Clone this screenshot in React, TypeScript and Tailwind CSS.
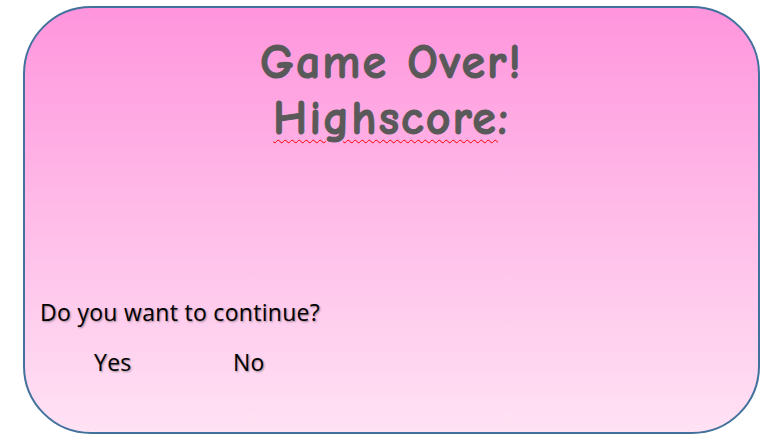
export default function App() {
  return (
    <div className="w-[783px] h-[445px] bg-white pt-[6px] pl-[23px]">
      <div
        className="w-[737px] h-[428px] rounded-[68px] border-2 border-[#41719c] bg-gradient-to-b from-[#ff95dd] to-[#ffe2f4] flex flex-col"
      >
        {/* Title */}
        <div
          className="mt-[27px] flex flex-col items-center text-[#595959] font-bold leading-[56px] text-[48px] tracking-[2px] [-webkit-text-stroke:1px_#595959]"
          style={{ fontFamily: '"Comic Sans MS", "Comic Neue", "DejaVu Sans", sans-serif' }}
        >
          <span>Game Over!</span>
          <span>
            <span className="underline decoration-wavy decoration-[#ff0000] decoration-1 underline-offset-[5px]">
              Highscore
            </span>
            :
          </span>
        </div>

        <div
          className="mt-auto mb-[56px] pl-[15px] text-black text-[23px] tracking-[0.3px] [text-shadow:1px_1px_2px_rgba(0,0,0,0.4)]"
          style={{ fontFamily: '"Open Sans", "Liberation Sans", sans-serif' }}
        >
          <p className="leading-[28px]">Do you want to continue?</p>
          <div className="flex mt-[22px] leading-[28px]">
            <span className="ml-[54px] w-[139px]">Yes</span>
            <span>No</span>
          </div>
        </div>
      </div>
    </div>
  );
}
